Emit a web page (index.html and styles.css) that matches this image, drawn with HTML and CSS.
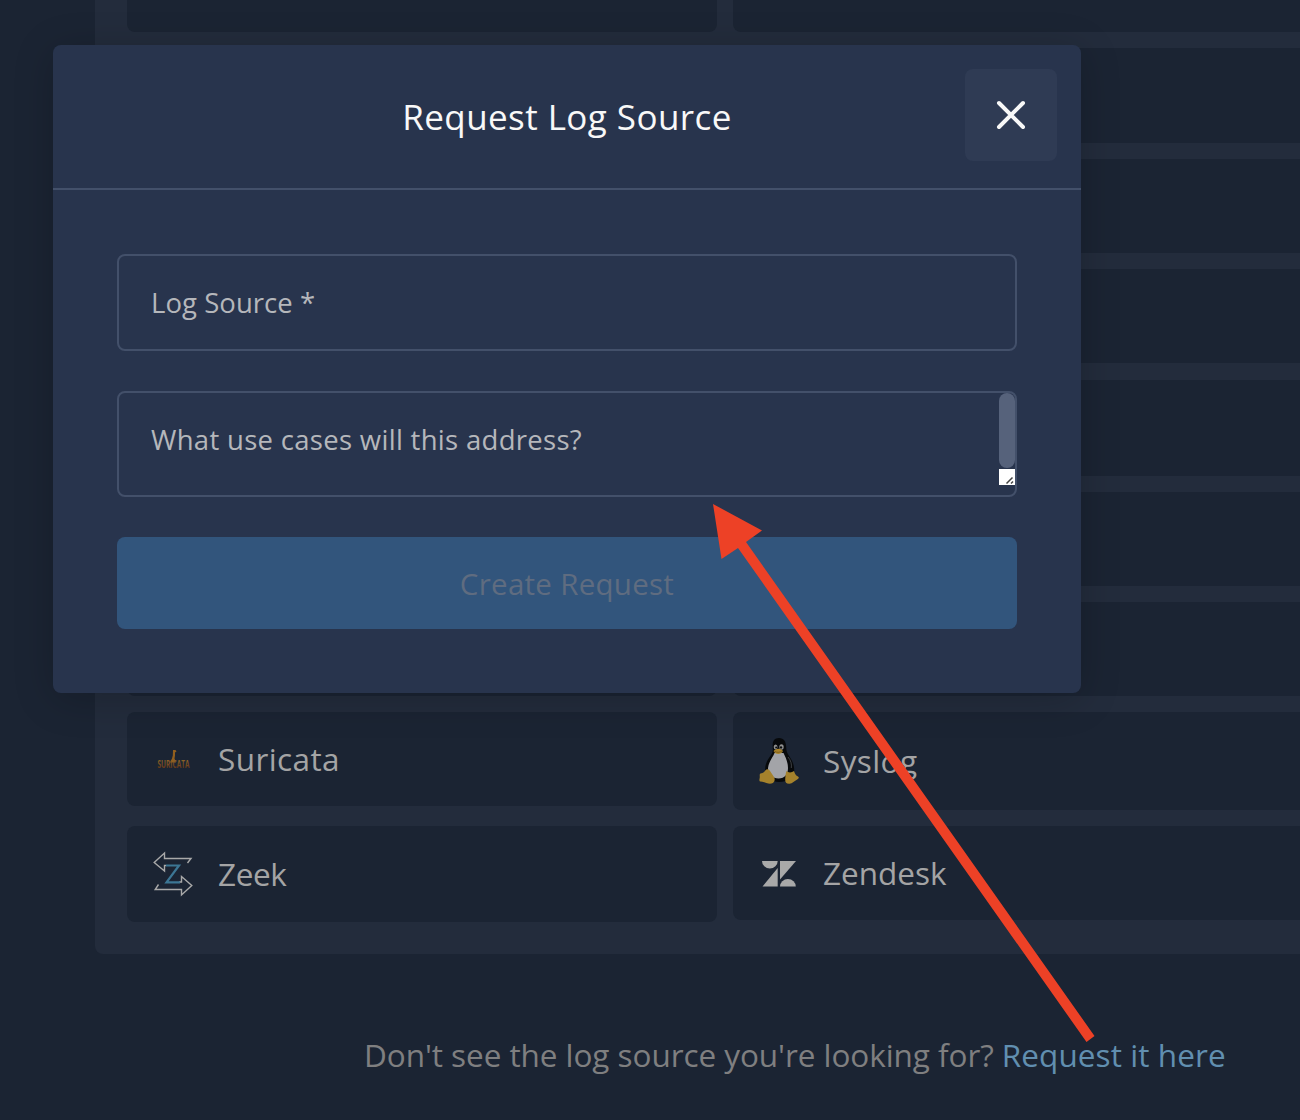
FILE: index.html
```
<!DOCTYPE html>
<html lang="en">
<head>
<meta charset="utf-8">
<title>Request Log Source</title>
<link rel="stylesheet" href="styles.css">
</head>
<body>
<main class="page">
  <section class="sources">
    <div class="source first"></div><div class="source right first"></div>
    <div class="source"></div><div class="source right h95"></div>
    <div class="source"></div><div class="source right"></div>
    <div class="source"></div><div class="source right"></div>
    <div class="source"></div><div class="source right h96"></div>
    <div class="source"></div><div class="source right"></div>
    <div class="source"></div><div class="source right"></div>
    <div class="source">
      <svg class="logo" width="40" height="46" viewBox="0 0 40 46">
        <defs><linearGradient id="ember" x1="0" y1="0" x2="0" y2="1"><stop offset="0.2" stop-color="#8a6228"/><stop offset="1" stop-color="#562714"/></linearGradient></defs>
        <path d="M20 14h2.500l1 1.500-1.500 1v3l-.5 3 1.500 4h-6l2-4 .8-3z" fill="#925f1e"/>
        <text class="suricata-word" x="4.500" y="32.300" textLength="32" lengthAdjust="spacingAndGlyphs" fill="url(#ember)">SURICATA</text>
      </svg>
      <span class="name suricata">Suricata</span>
    </div>
    <div class="source right h98">
      <svg class="logo" width="40" height="46" viewBox="0 0 40 46">
        <path d="M20 0c-5 0-6.500 3.500-6.300 8 .2 5 .3 6-2 9.500-3 4-5.700 8.500-5.500 14 .3 7 6 12.500 14 12.500s14.500-4 15-11c.2-6-2-10.500-4.800-14.500-2.500-3.500-3-5.500-3.200-9C27 3.500 25 0 20 0z" fill="#07090b"/>
        <path d="M15.500 15c-1.500 4-6 9-6.500 15-.3 6 4.500 10.500 10.500 10.500 6.500 0 9.500-4.500 9.500-10.500 0-6-2.500-11-4.500-15z" fill="#a3a4a8"/>
        <path d="M29 19c3 3.500 3.800 7 3.300 11" fill="none" stroke="#55585b" stroke-width=".7"/>
        <ellipse cx="16.600" cy="9" rx="1.900" ry="2.500" fill="#8f8f8f"/><ellipse cx="22.500" cy="9" rx="2.200" ry="2.700" fill="#8f8f8f"/>
        <circle cx="17.200" cy="9.400" r="1" fill="#090b0d"/><circle cx="22" cy="9.400" r="1.200" fill="#090b0d"/>
        <path d="M14.500 13c1.500-1.500 3-2.300 5-2.300s3.500 1 4.500 2.300c-.8 1.800-3 3-4.800 3-2 0-3.700-1.200-4.700-3z" fill="#a98229"/>
        <path d="M15.500 13.200c2.500 1.600 5 1.500 7.500-.2" fill="none" stroke="#67501d" stroke-width=".7"/>
        <path d="M1.500 35.500c2.500-.2 3.800-1.500 5-3.300 1-1.400 3-1.200 4.200.4l4.300 6.400c1.500 2.500.5 5.500-2.500 6.500-3 .8-6.500-1.500-11-2-1.500-.3-1.200-2-.8-3.500.3-1.700-.5-4 .8-4.500z" fill="#a5822c"/>
        <path d="M27.500 33c1.500 1.700 5 2 7.500 0 .8 3 2 4.500 4 5.500 1.500 1 .8 2-.8 3-2.800 1.500-4.700 4-7.700 4.300-3 .2-4.500-1.500-4.300-4.300.2-3 .3-6 1.300-8.500z" fill="#a5822c"/>
      </svg>
      <span class="name syslog">Syslog</span>
    </div>
    <div class="source h96">
      <svg class="logo" width="40" height="46" viewBox="0 0 40 46">
        <g fill="none" stroke="#a9a9a9" stroke-width="1.400"><path d="M34.500 12l3.500-4.500H11.500V2L1.200 11.500 11.500 20v-5.500H13"/><path d="M5.500 33.500L2.200 38.500H28.500V44L38.800 34.500 28.500 25.500V31H26"/></g>
        <path d="M13 14.500H26L13.500 31.300H27" fill="none" stroke="#3c7694" stroke-width="2.200"/>
      </svg>
      <span class="name zeek">Zeek</span>
    </div>
    <div class="source right">
      <svg class="logo" width="40" height="46" viewBox="0 0 40 46">
        <g fill="#a9a9a9"><path d="M3 11h15.700a7.850 7.500 0 0 1-15.700 0z"/><path d="M18.700 18v18.500H3.500z"/><path d="M21 11h16L21 29.500z"/><path d="M21 36.500a7.900 7.600 0 0 1 15.800 0z"/></g>
      </svg>
      <span class="name zendesk">Zendesk</span>
    </div>
  </section>
  <p class="hint"><span>Don't see the log source you're looking for?</span> <a class="hint-link">Request it here</a></p>
</main>

<div class="modal">
  <header class="modal-head">
    <h1 class="title">Request Log Source</h1>
    <button class="close" aria-label="Close"><svg width="30" height="30" viewBox="0 0 30 30"><path d="M3 3l24 24M27 3L3 27" stroke="#f8f8f8" stroke-width="4" stroke-linecap="round"/></svg></button>
  </header>
  <div class="form">
    <div class="field"><span class="ph-source">Log Source *</span></div>
    <div class="field area"><span class="ph-cases">What use cases will this address?</span>
      <div class="scroll"><div class="thumb"></div><svg class="grip" width="16" height="16" viewBox="0 0 16 16"><path d="M7.500 14.500L13.500 8.500M12 14.500L14 12.500" stroke="#444" stroke-width="1.500"/></svg></div>
    </div>
    <button class="submit">Create Request</button>
  </div>
</div>

<svg class="arrow" width="1300" height="1120" viewBox="0 0 1300 1120"><path d="M713 504L762 530.500 746 542 1094.500 1036 1086.500 1042 738 548 721.500 559z" fill="#ed4126"/></svg>
</body>
</html>
```
FILE: styles.css
```
* { box-sizing: border-box; }
body { margin: 0; width: 1300px; height: 1120px; overflow: hidden; position: relative; background: #1b2433; font-family: "Open Sans", sans-serif; }
button { border: 0; padding: 0; font-family: inherit; }

.page { padding-left: 95px; width: 1300px; }
.sources { display: grid; grid-template-columns: 590px 1fr; grid-template-rows: 32px 95px 94px 95px 96px 94px 94px 98px 96px; gap: 16px; align-items: start; padding: 0 0 32px 32px; background: #232c3c; border-radius: 0 0 0 8px; }
.source { display: flex; align-items: center; gap: 24px; height: 94px; padding-left: 26px; border-radius: 8px; background: #1b2433; color: #a4a4a5; }
.source.right { border-radius: 8px 0 0 8px; }
.source.first { height: 32px; border-radius: 0 0 8px 8px; }
.source.right.first { border-radius: 0 0 0 8px; }
.source.h95 { height: 95px; }
.source.h96 { height: 96px; }
.source.h98 { height: 98px; }
.logo { flex: none; overflow: visible; }
.suricata-word { font: 700 10px "Open Sans", sans-serif; }
.name { font-size: 31.5px; line-height: 42px; }
.suricata { margin-left: 1px; letter-spacing: 0.4px; }
.zeek { margin-left: 1px; letter-spacing: -0.4px; }
.syslog { letter-spacing: 0.4px; }

.hint { display: flex; gap: 8px; margin: 79px 0 0 269px; font-size: 31.5px; line-height: 44px; letter-spacing: -0.06px; color: #7f7f80; white-space: nowrap; }
.hint-link { color: #618fb0; letter-spacing: 0.08px; }

.modal { position: absolute; left: 53px; top: 45px; width: 1028px; height: 648px; border-radius: 8px; background: #28344d; box-shadow: 0 6px 40px rgba(0, 0, 0, 0.2); }
.modal-head { display: grid; grid-template-columns: 92px 1fr 92px; align-items: start; height: 145px; padding: 24px 24px 0; border-bottom: 2px solid #43506a; }
.title { grid-column: 2; margin: 0; text-align: center; font-size: 35px; font-weight: 400; line-height: 95px; letter-spacing: 0.43px; color: #f8f8f8; }
.close { display: grid; place-items: center; height: 92px; border-radius: 8px; background: #2f3b54; }
.form { display: flex; flex-direction: column; gap: 40px; padding: 64px; }
.field { display: flex; align-items: center; height: 97px; padding-left: 32px; border: 2px solid #43506a; border-radius: 8px; font-size: 27.5px; line-height: 40px; color: #b5b7bb; }
.ph-source { letter-spacing: 0.05px; }
.ph-cases { margin-top: 27px; letter-spacing: 0.3px; }
.area { height: 106px; align-items: flex-start; justify-content: space-between; }
.scroll { display: flex; flex-direction: column; gap: 1px; width: 16px; }
.thumb { height: 75px; border-radius: 8px; background: #56627b; }
.grip { background: #fff; }
.submit { height: 92px; border-radius: 8px; background: #32557c; color: #5f6c80; font-size: 29.5px; letter-spacing: 0.28px; }

.arrow { position: absolute; left: 0; top: 0; pointer-events: none; }
```
